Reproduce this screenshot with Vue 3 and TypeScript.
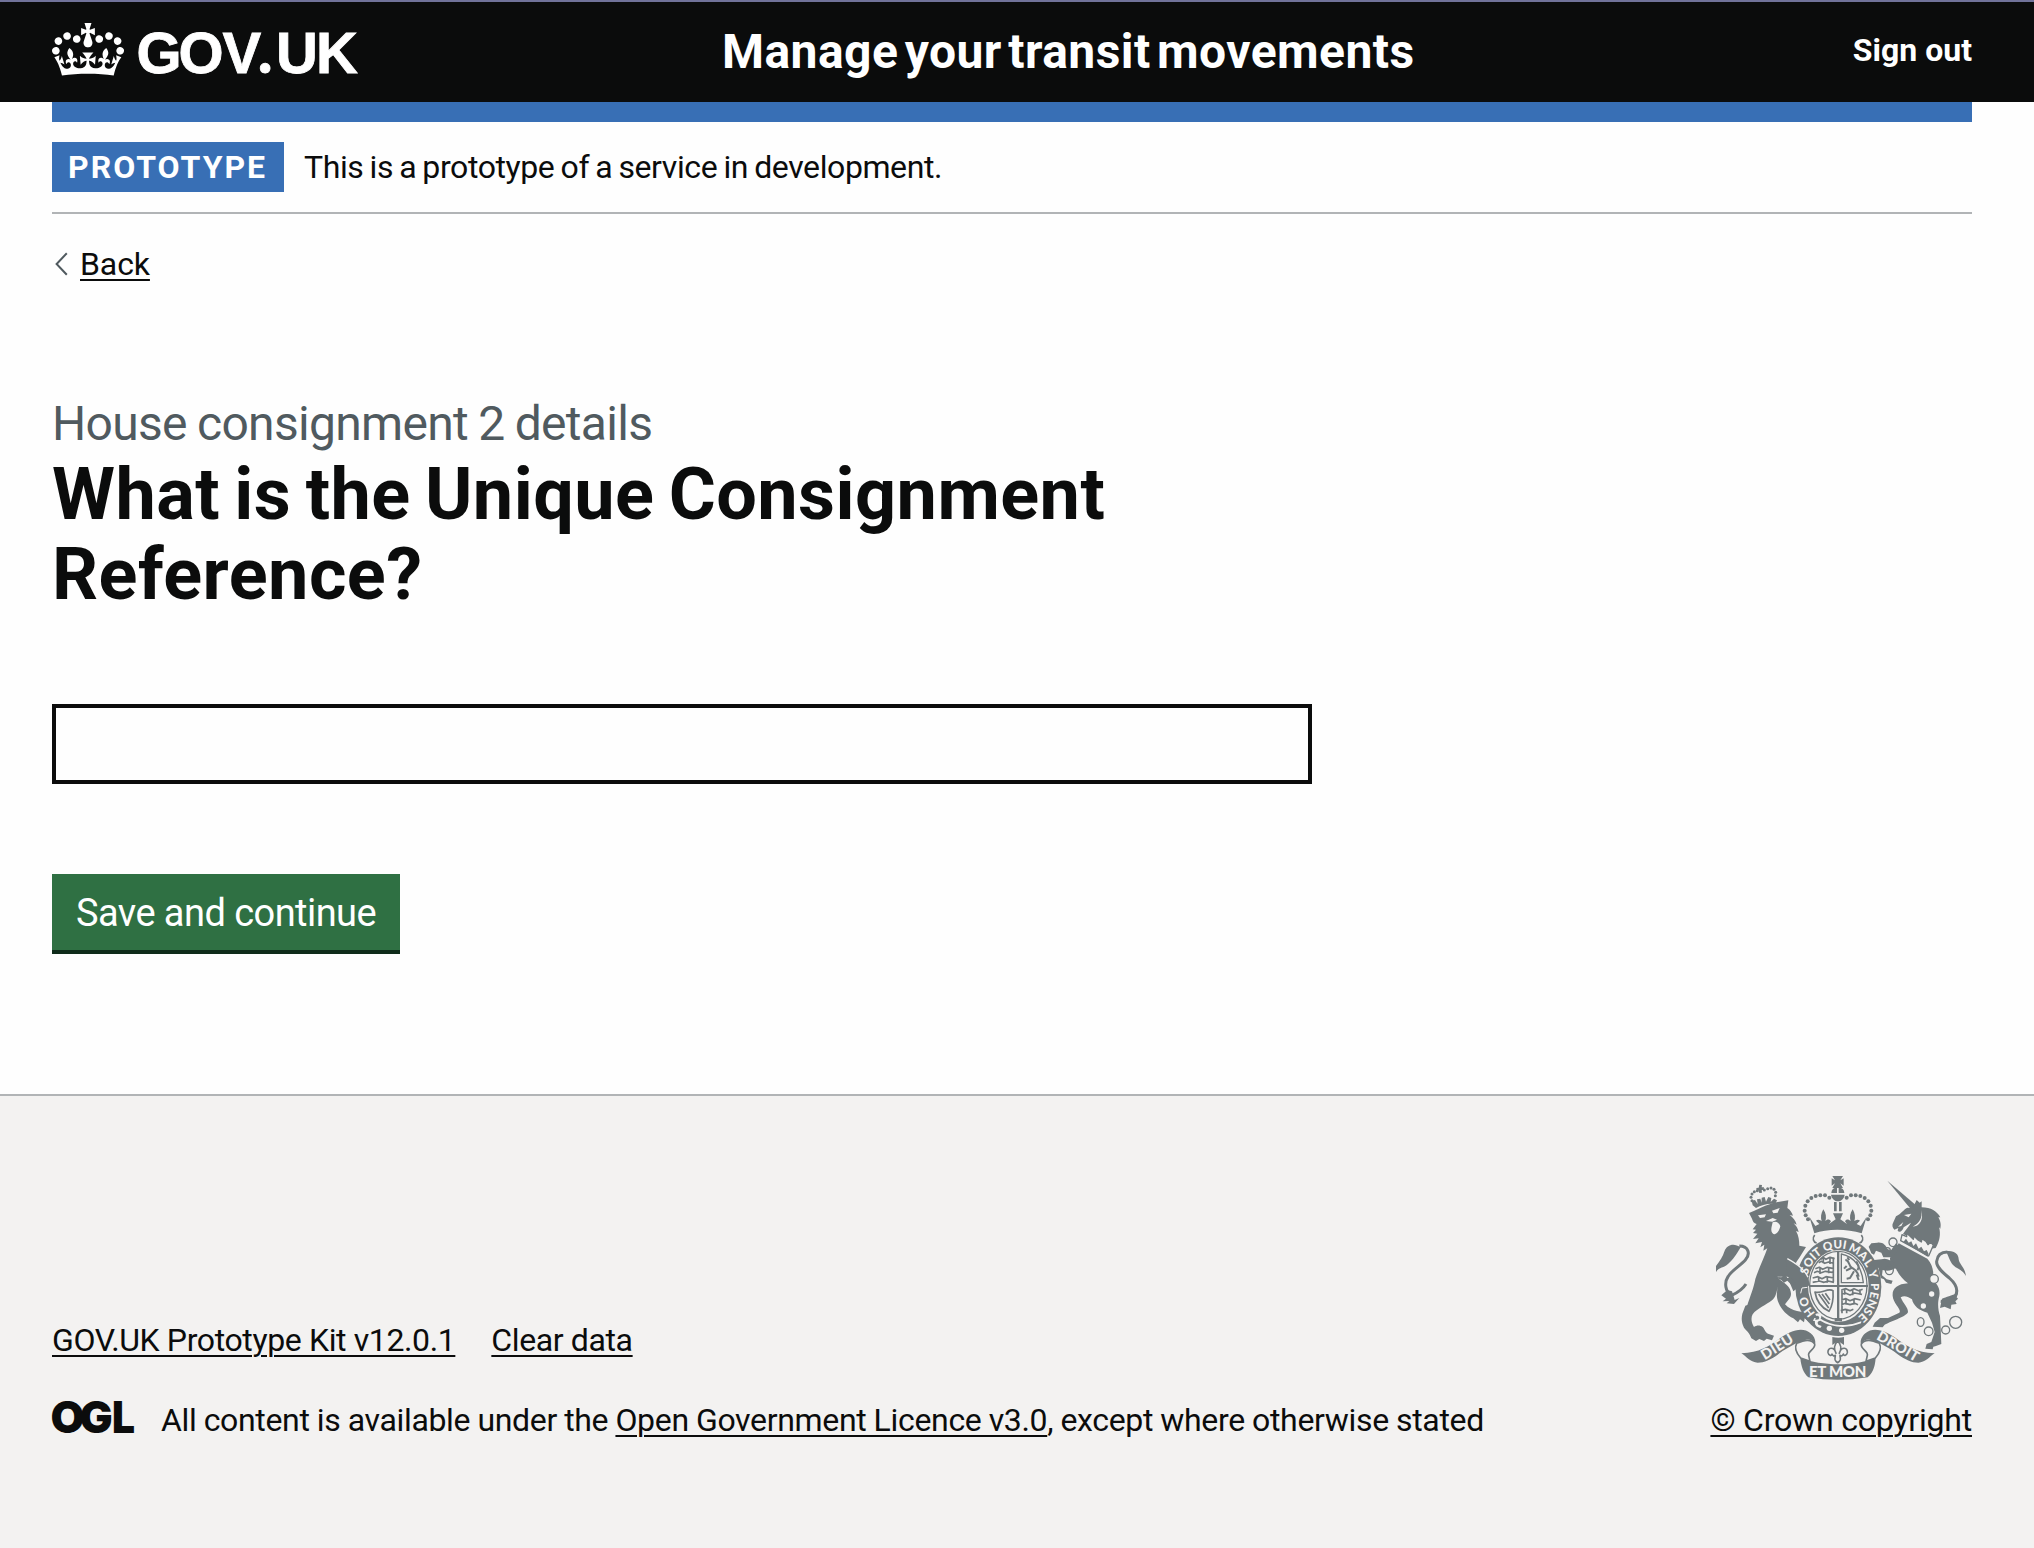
<script setup lang="ts">
interface RingLetter { ch: string; angle: number }

const footerLinks: string[] = ['GOV.UK Prototype Kit v12.0.1', 'Clear data']

// Letters of the garter motto, by clockwise angle from the top of the ring
const motto: RingLetter[] = [
  { ch: 'S', angle: -68 }, { ch: 'O', angle: -55 }, { ch: 'I', angle: -44.5 }, { ch: 'T', angle: -36 },
  { ch: 'Q', angle: -17 }, { ch: 'U', angle: -1 }, { ch: 'I', angle: 10 },
  { ch: 'M', angle: 27 }, { ch: 'A', angle: 43 }, { ch: 'L', angle: 56 },
  { ch: 'Y', angle: 73 },
  { ch: 'P', angle: 90 }, { ch: 'E', angle: 102 }, { ch: 'N', angle: 114 }, { ch: 'S', angle: 126 }, { ch: 'E', angle: 137 },
  { ch: 'H', angle: -127 }, { ch: 'O', angle: -111 },
]
const ringLetters = motto.map(({ ch, angle }) => {
  const t = (angle * Math.PI) / 180
  const x = 415 + 109 * Math.sin(t)
  const y = 380 - 127 * Math.cos(t)
  return { ch, transform: `translate(${x.toFixed(1)} ${y.toFixed(1)}) rotate(${angle})` }
})

// Pearls on the two arches of the large crown (left half, mirrored for the right)
const pearls: [number, number][] = [
  [388, 113], [375, 106], [361, 106], [347, 108], [334, 114], [323, 124], [316, 137], [314, 152], [317, 166], [324, 178],
]
const smallPearls: [number, number][] = [
  [156, 122], [153, 112], [156, 102], [163, 95], [172, 92], [193, 90], [203, 86], [213, 84], [222, 88], [227, 97], [226, 107],
]
</script>

<template>
  <div class="page">
    <header class="header">
      <div class="header-inner">
        <a class="logo">
          <svg class="crown" viewBox="0 0 132 97" width="72" height="53">
            <path fill="#fff" fill-rule="evenodd" d="M25 30.2c3.5 1.5 7.7-.2 9.1-3.7 1.5-3.6-.2-7.8-3.9-9.2-3.6-1.4-7.6.3-9.1 3.9-1.4 3.5.3 7.5 3.9 9zM9 39.5c3.6 1.5 7.8-.2 9.2-3.7 1.5-3.6-.2-7.8-3.9-9.1-3.6-1.5-7.6.2-9.1 3.8-1.4 3.5.3 7.5 3.8 9zM4.4 57.2c3.5 1.5 7.7-.2 9.1-3.8 1.5-3.6-.2-7.7-3.9-9.1-3.5-1.5-7.6.3-9.1 3.8-1.4 3.5.3 7.6 3.9 9.1zm38.3-21.4c3.5 1.5 7.7-.2 9.1-3.8 1.5-3.6-.2-7.7-3.9-9.1-3.6-1.5-7.6.3-9.1 3.8-1.3 3.6.4 7.7 3.9 9.1zm64.4-5.6c-3.6 1.5-7.8-.2-9.1-3.7-1.5-3.6.2-7.8 3.8-9.2 3.6-1.4 7.7.3 9.2 3.9 1.3 3.5-.4 7.5-3.9 9zm15.9 9.3c-3.6 1.5-7.7-.2-9.1-3.7-1.5-3.6.2-7.8 3.7-9.1 3.6-1.5 7.7.2 9.2 3.8 1.5 3.5-.3 7.5-3.8 9zm4.7 17.7c-3.6 1.5-7.8-.2-9.2-3.8-1.5-3.6.2-7.7 3.9-9.1 3.6-1.5 7.7.3 9.2 3.8 1.3 3.5-.4 7.6-3.9 9.1zM89.3 35.8c-3.6 1.5-7.8-.2-9.2-3.8-1.4-3.6.2-7.7 3.9-9.1 3.6-1.5 7.7.3 9.2 3.8 1.4 3.6-.3 7.7-3.9 9.1zM69.7 17.7l8.9 4.7V9.3l-8.9 2.8c-.2-.3-.5-.6-.9-.9L72.4 0H59.6l3.5 11.2c-.3.3-.6.5-.9.9l-8.8-2.8v13.1l8.8-4.7c.3.3.6.7.9.9l-5 15.4v.1c-.2.8-.4 1.6-.4 2.4 0 4.1 3.1 7.5 7 8.1h.2c.3 0 .7.1 1 .1.4 0 .7 0 1-.1h.2c4-.6 7.1-4.1 7.1-8.1 0-.8-.1-1.7-.4-2.4V34l-5.1-15.4c.4-.2.7-.6 1-.9zM66 92.8c16.9 0 32.8 1.1 47.1 3.2 4-16.9 8.9-26.7 14-33.5l-9.6-3.4c1 4.9 1.1 7.2 0 10.2-1.5-1.4-3-4.3-4.2-8.7L108.6 76c2.8-2 5-3.2 7.5-3.3-4.4 9.4-10 11.9-13.6 11.2-4.3-.8-6.3-4.6-5.6-7.9 1-4.7 5.7-5.9 8-.5 4.3-8.7-3-11.4-7.6-8.8 7.1-7.2 7.9-13.5 2.1-21.1-8 6.1-8.1 12.3-4.5 20.8-4.7-5.4-12.1-2.5-9.5 6.2 3.4-5.2 7.9-2 7.2 3.1-.6 4.3-6.4 7.8-13.5 7.2-10.3-.9-10.9-8-11.2-13.8 2.5-.5 7.1 1.8 11 7.3L80.2 60c-4.1 4.4-8 5.3-12.3 5.4 1.4-4.4 8-11.6 8-11.6H55.5s6.4 7.2 7.9 11.6c-4.2-.1-8-1-12.3-5.4l1.4 16.4c3.9-5.5 8.5-7.7 10.9-7.3-.3 5.8-.9 12.8-11.1 13.8-7.2.6-12.9-2.9-13.5-7.2-.7-5 3.8-8.3 7.1-3.1 2.7-8.7-4.6-11.6-9.4-6.2 3.7-8.5 3.6-14.7-4.6-20.8-5.8 7.6-5 13.9 2.2 21.1-4.7-2.6-11.9.1-7.7 8.8 2.3-5.5 7.1-4.2 8.1.5.7 3.3-1.3 7.1-5.7 7.9-3.5.7-9-1.8-13.5-11.2 2.5.1 4.7 1.3 7.5 3.3l-4.7-15.4c-1.2 4.4-2.7 7.2-4.3 8.7-1.1-3-.9-5.3 0-10.2l-9.5 3.4c5 6.9 9.9 16.7 14 33.5 14.8-2.1 30.8-3.2 47.7-3.2z" />
          </svg>
          <svg class="logotype" viewBox="0 0 230 68" width="230" height="68">
            <text class="logotype-text" x="0.5 42.5 86.5 122 140 180" y="51">GOV<tspan class="logotype-dot">.</tspan>UK</text>
          </svg>
        </a>
        <span class="service">Manage your transit movements</span>
        <a class="signout">Sign out</a>
      </div>
    </header>

    <div class="container">
      <div class="blue-bar"></div>
      <div class="phase">
        <strong class="tag">PROTOTYPE</strong>
        <span class="phase-text">This is a prototype of a service in development.</span>
      </div>
      <a class="back">
        <svg width="16" height="24" viewBox="0 0 16 24"><path d="M14.8 1.2 4.6 12l10.2 10.8" fill="none" stroke="#505a5f" stroke-width="2" /></svg>
        <span class="back-text">Back</span>
      </a>
      <main class="main">
        <span class="caption">House consignment 2 details</span>
        <h1 class="heading">What is the Unique Consignment Reference?</h1>
        <input class="input" type="text" />
        <button class="button" type="button">Save and continue</button>
      </main>
    </div>

    <footer class="footer">
      <div class="footer-inner">
        <div class="footer-meta">
          <div class="footer-links">
            <a v-for="link in footerLinks" :key="link" class="link">{{ link }}</a>
          </div>
          <div class="licence">
            <svg class="ogl" width="84" height="40" viewBox="0 0 84 40">
              <text class="ogl-text" x="-1.5 27.5" y="33">OG</text>
              <text class="ogl-text" x="60" y="33" textLength="23" lengthAdjust="spacingAndGlyphs">L</text>
            </svg>
            <span class="licence-text">All content is available under the <a class="link">Open Government Licence v3.0</a>, except where otherwise stated</span>
          </div>
        </div>
        <div class="copyright">
          <svg class="crest" viewBox="48 48 750 612" width="250" height="204">
            <g fill="#70787b" stroke-linejoin="round">
              <!-- large crown -->
              <path d="M397 48h32l-8 13 10-6v22l-10-7 8 14h-32l8-14-10 7V55l10 6zM394 99a20 18 0 0 1 17-17v17zM416 82a20 18 0 0 1 17 17h-17zM393 104h41c-2 12-10 20-20 20s-19-8-21-20z" />
              <path d="M402 126h8v28h-8zM417 126h8v28h-8z" />
              <g v-for="([x, y], i) in pearls" :key="'p' + i">
                <circle :cx="x" :cy="y" r="6" /><circle :cx="828 - x" :cy="y" r="6" />
              </g>
              <path d="M328 170l18 28 12-6-10-10c6-6 14-2 17 2-4-12-2-24 5-36 8 12 10 24 6 36 4-6 12-8 17 0l-6 8 20-14-8-18h30l-8 18 20 14-6-8c4-8 12-6 17 0-4-12-2-24 6-36 7 12 9 24 5 36 3-4 11-8 17-2l-10 10 12 6 18-28-15 50c-44-14-104-14-142 0z" />
              <path fill="none" stroke="#70787b" stroke-width="5" d="M344 225c-8 10-4 22 6 24M484 225c8 10 4 22-6 24" />

              <!-- garter and shield -->
              <ellipse cx="415" cy="380" rx="129" ry="148" />
              <ellipse cx="415" cy="378" rx="91" ry="108" fill="#f3f2f1" />
              <ellipse cx="415" cy="376" rx="86" ry="102" fill="none" stroke="#70787b" stroke-width="4" />
              <path d="M411 273h7v206h-7zM327 375h177v6H327z" />
              <path d="M424 282c40 8 62 42 66 86h-66z" fill="none" stroke="#70787b" stroke-width="4" />
              <g fill="none" stroke="#70787b" stroke-width="5">
                <path d="M362 298l8-6 8 6 12-6 14 4M356 308l8-4 10 6 12-4 16 4M346 326l12-4 10 6 14-6 20 4M342 338l10-4 12 4 12-4 26 4M338 354l16-4 12 6 12-6 24 4M338 367l20-4 14 4 12-4 18 4M370 292v18M390 290v22M360 322v20M386 322v18M356 350v16M382 350v18M400 292v74" />
                <path d="M424 390l14-4 12 6 12-6 14 6 12-4M424 403l12-4 14 6 14-6 22 4M424 420l14-4 12 6 14-6 18 4M424 434l12-4 14 4 14-4 10 4M422 452l14-4 14 4 10-4M434 388v16M458 390v16M480 388v16M438 418v16M462 418v16M440 446v14M426 388v72" />
                <path stroke-width="6" d="M436 300c12 0 10 16 18 22s20 10 22 28M454 324l-16 8M462 334l-12 20-10 2M470 344l6 16M448 300l-6-8M472 330c12-14-6-18 0-26M440 318l-8 8" />
                <path stroke-width="5" d="M345 396c4 26 14 44 42 58 10-16 14-34 12-62-16-10-32 10-54 4zM356 402l30 42M366 402l22 30M376 400l14 20" />
              </g>
              <path d="M404 474h22v10h-22z" />
              <path fill="#f3f2f1" d="M346 462c14-8 22 4 16 14 40 24 70 20 96 16l26-8-1 6c-46 18-88 12-122-8-8 2-10 4-6 12l10 4-4 6c-12-2-18-10-16-20l-6-2 4-8 8 0z" />
              <path d="M348 468c8-3 12 4 8 10l-10 2z" />
              <circle cx="388" cy="505" r="8" fill="#f3f2f1" /><circle cx="425" cy="511" r="8" fill="#f3f2f1" />

              <!-- lion -->
              <g>
                <path d="M158 136l-3-14 10-2 8 12-2-14 10-2 4 12 0-15 9-2 4 14 7-14 9 3-2 12 10-10 9 5-5 11c-24-2-42 4-58 12z" />
                <circle v-for="([x, y], i) in smallPearls" :key="i" :cx="x" :cy="y" r="4.5" />
                <path d="M178 74l8 1-1 7 7 0-1 8-6 0 1 8-8 1-2-8-6 1-1-8 7-1z" />
                <path d="M147 159l16-7c22-10 42-20 70-26l32-5-3 23c9 6 14 14 17 23l-10-2c10 8 18 16 21 29l-9-4c8 8 12 14 15 26l-8-3c8 14 10 30 10 44l20 4-20 32c-18 24-22 44-20 62-16-8-32-6-48-4l12 10c18 12 30 22 31 40 0 14-12 22-18 32 10 12 22 16 36 20 16 2 28 8 39 18l-4 14-12-10-2 12-12-9-6 9-14-12c-18-8-36-26-44-46-8-16-6-34-2-52-4 18-6 34-18 44-18 14-44 24-58 42-6 10-4 26 4 38 8-6 18-6 26 0 6 6 6 14 16 20l18 6-6 14-16-5-8 7-14-6-10 6-14-8c-6-18-16-24-22-32-8-16-8-28-5-42l9-24 6-2c8-24 20-54 24-78 8-26 26-62 36-92l-12 7 3-18-12 8 5-16-20 4 10-15-17 2 13-16-13-2 9-10-10-1 12-16c-8-2-12-8-14-16z" />
                <path fill="#f3f2f1" d="M174 166l24-3-4 9-14 2zM216 152l23-8-6 14-13 2zM218 187c10-6 20 2 23 12-4 18-16 30-24 20-6-8-2-18 1-32zM198 183l20-9 13 5-14 6z" />
                <path fill="none" stroke="#70787b" stroke-width="9" d="M138 372c-14 22-30 28-44 34-18-10-22-38-10-56 12-20 38-34 52-50 16-18 10-42-18-42" />
                <path d="M122 262c-22-16-42-6-48 10-6 18-14 30-26 46v18c10-16 24-12 36-24 16-14 24-26 38-50zM82 390l14 4 8 26 14-6-16 18-22-2 8-7-20 1 10-8-14-10z" />
                <path d="M256 292c32 16 58 34 68 60l5 22-12 12-14-4-2 16-13-10-8 6-10-24-8-34z" />
                <path fill="none" stroke="#f3f2f1" stroke-width="4" d="M262 296c30 16 52 32 62 56" />
                <path fill="none" stroke="#f3f2f1" stroke-width="3" d="M322 382l-16 2-4 16" />
                <path d="M222 350l22 2 12-10 6 12 12-2 14 20-14 2-12-12-10 6-8-8z" />
              </g>

              <!-- unicorn -->
              <g>
                <path d="M562 62l86 74-14 13z" />
                <path d="M634 144c8-6 12-16 16-24l9 8 6-4 0 18c28 0 46 12 56 30l-6 0c8 14 8 24 6 34l-4-4c6 20 2 42-10 62l-14 2-12-10-72-34c8-14 18-22 24-34l-22 14c-4 14-14 16-18 10l2-8-12 5c-6-6-8-14-3-22l8-18c16-8 22-20 34-26z" />
                <path fill="#f3f2f1" d="M612 165l22-4-8 11zM594 200l16-14-6 12zM664 150c4 24-6 40-26 50 20 0 34-20 26-50z" />
                <path fill="#f3f2f1" stroke="#70787b" stroke-width="4" d="M606 224l14 6 0-10 12 10 8 8 2-10 12 12 10 6 2-10 12 8 6 10 8-8 8 10-14 32-84-46z" />
                <path d="M610 246l8-10 8 12 8-4 6 14 8-8 8 16 8-6 8 14 8-4 6 12-3 8z" />
                <path d="M596 250l86 46c18 20 20 44 16 62 10 12 24 24 20 50-6 22-4 40 2 60l2 40 2 44-16 6-8 2-2 8-22-2 4-14 14-6 10-30-8-28-14-30c-24-6-42-20-46-40-14-8-22-12-34-6 8 20 22 30 22 44-2 12-46 26-70 38l-6 8-30-2 6-12 16-14 24 0 34-16c8-10-18-26-20-50-2-22 14-36 46-38-14-10-28-26-36-44-16-4-18-18-18-32z" />
                <path d="M600 262l-22 30-28 0-6-14-16-6-6 12-8-4-8-20 8-10 18-2c18-2 24 8 30 18l10 6 16-22zM594 322c-20 8-28 14-46 8l-2 16 14 12 18 4-4 10-16-4-6-10-10-4-4-18-2-12-24-8-8-10 12-5 28-3c16-6 28 4 40 10z" />
                <path fill="none" stroke="#70787b" stroke-width="9" d="M722 424c16 2 34-2 44-16 10-18 0-38-18-54-22-18-40-34-38-50 2-18 12-28 32-28" />
                <path d="M738 274c24-4 38 8 38 24 2 16 18 22 22 50-12-20-26-20-38-32-10-10-12-22-22-42zM726 416c14-6 26-8 48-18l-4 14 4 4-8 8 4 8-16 2-2 14-18-8-14 4z" />
                <circle cx="695" cy="402" r="8" fill="#f3f2f1" /><circle cx="670" cy="438" r="8" fill="#f3f2f1" />
              </g>
              <g fill="none" stroke="#70787b" stroke-width="4">
                <ellipse cx="579" cy="247" rx="12" ry="13" /><circle cx="562" cy="272" r="9" />
                <ellipse cx="568" cy="330" rx="12" ry="14" /><circle cx="702" cy="357" r="13" fill="#f3f2f1" />
                <ellipse cx="662" cy="486" rx="10" ry="13" /><circle cx="686" cy="514" r="13" />
                <circle cx="737" cy="510" r="12" /><circle cx="767" cy="487" r="18" />
              </g>

              <!-- fleur-de-lis pendant -->
              <path d="M397 531c12 3 24 3 35 0v24l-18-12-17 12z" />
              <path fill="#f3f2f1" stroke="#70787b" stroke-width="5" d="M413 542c-12 14-12 24-5 38-6-22-26-18-24-2 2 10 12 10 12 4 4 8 6 6 10 4 0 10-6 14 7 22 13-8 7-12 7-22 4 2 6 4 10-4 0 6 10 6 12-4 2-16-18-20-24 2 7-14 7-24-5-38z" />

              <!-- ribbon -->
              <path d="M124 580c56-2 84-22 120-48 22-16 62-36 88-12 12 10 16 24 13 32-10-14-24-16-32-10l-22 6c-20 12-40 20-58 36-20 14-40 24-60 24s-34-18-49-28z" />
              <path d="M704 580c-56-2-84-22-120-48-22-16-62-36-88-12-12 10-16 24-13 32 10-14 24-16 32-10l22 6c20 12 40 20 58 36 20 14 40 24 60 24s34-18 49-28z" />
              <path d="M301 594c66 25 162 25 226 0-2 28-10 46-24 58-60 10-120 10-178 0-14-12-22-32-24-58z" />
              <path fill="#f3f2f1" stroke="#70787b" stroke-width="5" d="M290 550c24-10 42-14 54 2 4 14-22 22-18 34l4 18-28-10c-12-14-20-30-12-44zM538 550c-24-10-42-14-54 2-4 14 22 22 18 34l-4 18 28-10c12-14 20-30 12-44z" />
            </g>
            <g class="crest-text" fill="#f3f2f1">
              <text v-for="(l, i) in ringLetters" :key="i" class="ring-letter" :transform="l.transform" text-anchor="middle" dy="12">{{ l.ch }}</text>
              <text transform="translate(194 601) rotate(-32)" textLength="106" lengthAdjust="spacing">DIEU</text>
              <text transform="translate(527 537) rotate(30)" textLength="138" lengthAdjust="spacing">DROIT</text>
              <text class="et-mon" x="327" y="650" textLength="172" lengthAdjust="spacing">ET MON</text>
            </g>
          </svg>
          <a class="link">© Crown copyright</a>
        </div>
      </div>
    </footer>
  </div>
</template>

<style>
body { margin: 0; background: #fefefe; }
</style>

<style scoped>
.page {
  display: flex;
  flex-direction: column;
  box-sizing: border-box;
  min-height: 1548px;
  font-family: Roboto, "Liberation Sans", sans-serif;
  font-size: 32px;
  line-height: 40px;
  color: #0b0c0c;
  background: #fefefe;
}
.header {
  box-sizing: border-box;
  height: 102px;
  padding: 0 62px 0 52px;
  border-top: 2px solid #71739a;
  background: #0b0c0c;
  color: #fff;
}
.header-inner {
  display: grid;
  grid-template-columns: 670px 1fr auto;
  align-items: start;
  height: 100px;
}
.logo { display: flex; }
.crown { display: block; margin-top: 21px; }
.logotype { display: block; margin: 20px 0 0 12px; overflow: visible; }
.logotype-text {
  font: 700 58px "Liberation Sans", Arial, sans-serif;
  fill: #fff;
  stroke: #fff;
  stroke-width: 0.8px;
}
.logotype-dot { font: 900 60px Lato, sans-serif; }
.service {
  margin-top: 22px;
  font-size: 48px;
  line-height: 56px;
  font-weight: 700;
  letter-spacing: 0.45px;
  word-spacing: -6px;
}
.signout {
  margin-top: 28px;
  font-weight: 700;
}
.container { padding: 0 62px 0 52px; }
.blue-bar { height: 20px; background: #386fb5; }
.phase {
  display: flex;
  align-items: center;
  box-sizing: border-box;
  height: 92px;
  border-bottom: 2px solid #b1b4b6;
}
.tag {
  box-sizing: border-box;
  width: 232px;
  height: 50px;
  padding: 5px 0 5px 16px;
  background: #386fb5;
  color: #fff;
  letter-spacing: 2px;
}
.phase-text { margin-left: 20px; letter-spacing: -0.4px; word-spacing: -1.4px; }
.back {
  display: flex;
  align-items: center;
  width: max-content;
  margin-top: 30px;
  height: 40px;
  letter-spacing: -0.1px;
}
.back-text, .link {
  text-decoration: underline;
  text-decoration-thickness: 2px;
  text-underline-offset: 4px;
}
.back svg { margin-right: 12px; }
.main { display: flex; flex-direction: column; align-items: flex-start; height: 810px; }
.caption {
  margin-top: 110px;
  font-size: 48px;
  line-height: 60px;
  letter-spacing: -0.7px;
  word-spacing: -1px;
  color: #505a5f;
}
.heading {
  width: 1260px;
  margin: 1px 0 0;
  font-size: 72px;
  line-height: 80px;
  font-weight: 700;
  letter-spacing: 0.45px;
  word-spacing: -4px;
}
.input {
  box-sizing: border-box;
  width: 1260px;
  height: 80px;
  margin: 89px 0 0;
  border: 4px solid #0b0c0c;
  border-radius: 0;
  background: #fefefe;
}
.button {
  box-sizing: border-box;
  width: 348px;
  height: 80px;
  margin-top: 90px;
  padding: 2px 0 0;
  border: 0;
  border-bottom: 4px solid #0f2b1a;
  background: #2f7043;
  color: #fff;
  font: 400 38px/74px Roboto, sans-serif;
  letter-spacing: -0.55px;
  white-space: nowrap;
}
.footer {
  flex: 1;
  padding: 80px 62px 0 52px;
  border-top: 2px solid #b1b4b6;
  background: #f3f2f1;
  letter-spacing: -0.38px;
}
.footer-inner { display: flex; justify-content: space-between; align-items: flex-end; }
.footer-links { display: flex; gap: 36px; margin-bottom: 40px; }
.licence { display: flex; }
.licence-text { letter-spacing: -0.33px; word-spacing: -0.4px; }
.ogl { margin: 0 25px 0 0; overflow: visible; letter-spacing: 0; }
.ogl-text { font: 900 44px Inter, sans-serif; fill: #0b0c0c; }
.copyright { display: flex; flex-direction: column; align-items: center; letter-spacing: -0.2px; }
.crest { display: block; margin-bottom: 20px; letter-spacing: 0; }
.crest-text { font: 900 43px Lato, sans-serif; }
.ring-letter { font-size: 35px; }
.et-mon { font-size: 45px; }
</style>
